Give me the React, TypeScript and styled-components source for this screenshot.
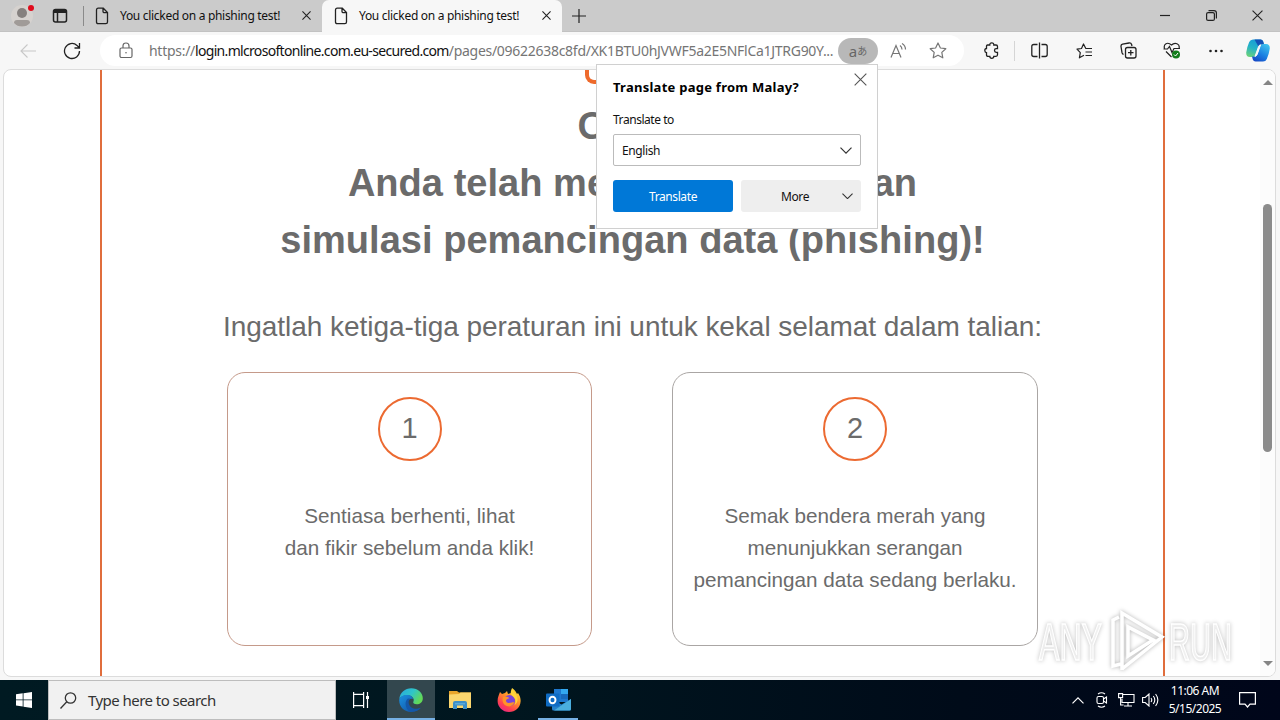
import React from 'react'
import styled, {createGlobalStyle} from 'styled-components'

const GlobalStyle = createGlobalStyle`
    * {
        box-sizing: border-box;
    }
    body {
        margin: 0;
        overflow: hidden;
        font-family: 'Noto Sans', sans-serif;
    }
    svg {
        display: block;
        flex: none;
    }
`

const Desktop = styled.div`
    position: relative;
    display: flex;
    flex-direction: column;
    width: 1280px;
    height: 720px;
    background: #f7f7f7;
    overflow: hidden;
`

/* Tab strip */

const TabStrip = styled.div`
    display: flex;
    align-items: center;
    height: 32px;
    background: #cbcbcb;
    border-bottom: 1px solid #c2c2c2;
`

const Profile = styled.div`
    width: 40px;
    padding-left: 10px;
`

const TabActions = styled.div`
    width: 43px;
    padding-left: 11px;
`

const Divider = styled.div<{$tone?: string}>`
    width: 1px;
    height: 20px;
    background: ${(p) => p.$tone || '#8a8a8a'};
`

const Tab = styled.div<{$active?: boolean}>`
    display: flex;
    align-items: center;
    width: ${(p) => (p.$active ? 240 : 238)}px;
    height: 32px;
    padding: 0 11px 0 ${(p) => (p.$active ? 12 : 11)}px;
    background: ${(p) => (p.$active ? '#f7f7f7' : 'transparent')};
    border-radius: 7px 7px 0 0;
    font-size: 12px;
    color: #111;
`

const TabTitle = styled.div`
    flex: 1;
    margin-left: 11px;
    letter-spacing: -0.3px;
    white-space: nowrap;
`

const NewTab = styled.div`
    flex: 1;
    padding-left: 10px;
`

const WindowButton = styled.div`
    display: flex;
    justify-content: center;
    width: 46px;
`

/* Toolbar */

const Toolbar = styled.div`
    display: flex;
    align-items: center;
    height: 37px;
    background: #f7f7f7;
`

const NavButton = styled.div`
    display: flex;
    justify-content: center;
    width: 44px;
    &:first-child {
        margin-left: 6px;
    }
`

const AddressBar = styled.div`
    display: flex;
    align-items: center;
    width: 864px;
    height: 31px;
    margin-left: 6px;
    padding-left: 18px;
    background: #fff;
    border-radius: 16px;
`

const Url = styled.div`
    width: 689px;
    margin-left: 15px;
    font-size: 14px;
    letter-spacing: -0.28px;
    white-space: nowrap;
    color: #757575;
    b {
        font-weight: 400;
        letter-spacing: -0.68px;
        color: #111;
    }
`

const TranslatePill = styled.div`
    display: flex;
    align-items: center;
    justify-content: center;
    width: 40px;
    height: 26px;
    border-radius: 13px;
    background: #b8b8b8;
    color: #666;
    font: 15px/24px 'Noto Sans', 'Noto Sans CJK JP', sans-serif;
    small {
        font-size: 10px;
    }
`

const AddressIcon = styled.div`
    display: flex;
    justify-content: center;
    width: 40px;
`

const ToolIcons = styled.div`
    display: flex;
    flex: 1;
    align-items: center;
    padding-left: 6px;
`

const ToolIcon = styled.div<{$width?: number}>`
    display: flex;
    justify-content: center;
    width: ${(p) => p.$width || 44}px;
`

/* Page */

const PageFrame = styled.div`
    display: flex;
    width: 1273px;
    height: 608px;
    margin: 0 0 3px 3px;
    background: #fff;
    border: 1px solid #dcdcdc;
    border-radius: 8px;
    overflow: hidden;
`

const PageColumn = styled.div`
    display: flex;
    flex-direction: column;
    align-items: center;
    width: 1065px;
    margin-left: 96px;
    border: 2px solid #e06d3c;
    border-width: 0 2px;
    font-family: 'Liberation Sans', Arial, sans-serif;
    color: #6b6b6b;
`

const LogoEdge = styled.div`
    width: 96px;
    height: 14px;
    border: 4px solid #ee6a2c;
    border-top: 0;
    border-radius: 0 0 9px 9px;
`

const Heading = styled.h1`
    margin: 14px 0 0;
    font-size: 38px;
    line-height: 57px;
    letter-spacing: 0.04px;
    text-align: center;
    white-space: nowrap;
`

const Lead = styled.p`
    margin: 38px 0 0;
    font-size: 28px;
    line-height: 40px;
    letter-spacing: -0.04px;
    white-space: nowrap;
`

const Cards = styled.div`
    display: flex;
    gap: 80px;
    margin-top: 25px;
`

const Card = styled.div<{$edge: string; $width: number}>`
    display: flex;
    flex-direction: column;
    align-items: center;
    width: ${(p) => p.$width}px;
    height: 274px;
    padding-top: 24px;
    border: 1px solid ${(p) => p.$edge};
    border-radius: 18px;
`

const Step = styled.div`
    width: 64px;
    height: 64px;
    border: 2px solid #ec6a31;
    border-radius: 50%;
    font-size: 29px;
    line-height: 59px;
    text-align: center;
`

const CardText = styled.p`
    margin: 39px 0 0;
    font-size: 20.7px;
    line-height: 32px;
    text-align: center;
    white-space: nowrap;
`

const Scrollbar = styled.div`
    display: flex;
    flex-direction: column;
    align-items: center;
    width: 15px;
    margin-left: auto;
    padding: 9px 0;
    background: #fcfcfc;
`

const ScrollThumb = styled.div`
    width: 9px;
    height: 248px;
    margin: 119px 0 auto;
    border-radius: 5px;
    background: #8b8b8b;
`

/* Translate popup */

const Popup = styled.div`
    position: absolute;
    left: 596px;
    top: 64px;
    width: 282px;
    height: 165px;
    padding: 14px 16px;
    background: #fff;
    border: 1px solid #d0d0d0;
    font-size: 12px;
    color: #111;
`

const PopupHeader = styled.div`
    display: flex;
    justify-content: space-between;
    height: 32px;
    margin-right: -6px;
    font-weight: 700;
    font-size: 13px;
    line-height: 17px;
    letter-spacing: 0.26px;
    white-space: nowrap;
    color: #000;
    svg {
        margin-top: -6px;
    }
`

const Label = styled.div`
    height: 23px;
    line-height: 18px;
    letter-spacing: -0.45px;
`

const Select = styled.div`
    display: flex;
    align-items: center;
    justify-content: space-between;
    height: 32px;
    padding: 0 8px;
    border: 1px solid #bbb;
    border-radius: 2px;
    letter-spacing: -0.4px;
`

const PopupButtons = styled.div`
    display: flex;
    gap: 8px;
    margin-top: 14px;
`

const PopupButton = styled.div<{$primary?: boolean}>`
    display: flex;
    align-items: center;
    justify-content: ${(p) => (p.$primary ? 'center' : 'flex-end')};
    gap: 33px;
    width: 120px;
    height: 32px;
    padding: ${(p) => (p.$primary ? 0 : '0 8px 0 0')};
    border-radius: 3px;
    letter-spacing: -0.4px;
    background: ${(p) => (p.$primary ? '#0078d7' : '#eee')};
    color: ${(p) => (p.$primary ? '#fff' : '#111')};
`

/* Taskbar */

const Taskbar = styled.div`
    display: flex;
    align-items: stretch;
    height: 40px;
    background: linear-gradient(90deg, #001a22 0%, #00161f 40%, #000b19 75%, #00061a 100%);
    color: #fff;
`

const TaskButton = styled.div<{$active?: boolean; $open?: boolean; $width?: number}>`
    display: flex;
    align-items: center;
    justify-content: center;
    width: ${(p) => p.$width || 48}px;
    background: ${(p) => (p.$active ? '#33474e' : 'transparent')};
    box-shadow: ${(p) => (p.$active || p.$open ? 'inset 0 -2px #76b0e4' : 'none')};
`

const SearchBox = styled.div`
    display: flex;
    align-items: center;
    gap: 11px;
    width: 288px;
    padding-left: 11px;
    background: #f1f1f1;
    border: 1px solid #bdbdbd;
    color: #333;
    font-size: 15px;
    letter-spacing: -0.55px;
`

const Tray = styled.div`
    display: flex;
    align-items: center;
    margin-left: auto;
`

const TrayIcon = styled.div`
    display: flex;
    justify-content: center;
    width: 24px;
`

const Clock = styled.div`
    width: 66px;
    font-size: 12px;
    line-height: 18px;
    letter-spacing: -0.5px;
    text-align: center;
    white-space: nowrap;
`

const Notifications = styled.div`
    display: flex;
    justify-content: center;
    width: 38px;
    margin-right: 14px;
`

const Watermark = styled.svg`
    position: absolute;
    left: 1030px;
    top: 600px;
    filter: drop-shadow(0 0 2px rgba(0, 0, 0, 0.3));
`

const strokeProps = {fill: 'none', stroke: '#222', strokeWidth: 1.2}

const FileIcon = () => (
    <svg width="14" height="18" viewBox="0 0 14 18" {...strokeProps} strokeWidth="1.3">
        <path d="M1.5 3q0-1.8 1.8-1.8h5l4.2 4.3V15q0 1.7-1.7 1.7H3.2Q1.5 16.7 1.5 15zM8 1.5V4.2q0 1.5 1.5 1.5h3" />
    </svg>
)

const CrossIcon = ({size = 10, color = '#222'}: {size?: number; color?: string}) => (
    <svg width={size} height={size} viewBox="0 0 10 10" fill="none" stroke={color} strokeWidth={11 / size}>
        <path d="M.5.5l9 9M9.5.5l-9 9" />
    </svg>
)

const ChevronDown = ({size = 12}: {size?: number}) => (
    <svg width={size} height={size / 2 + 1} viewBox="0 0 12 7" fill="none" stroke="#333" strokeWidth="1.2">
        <path d="M.5.6L6 6.1 11.5.6" />
    </svg>
)

const EdgeIcon = () => (
    <svg width="24" height="24" viewBox="0 0 24 24">
        <defs>
            <linearGradient id="edgeTop" x1="0" y1="0" x2="1" y2=".5">
                <stop offset="0" stopColor="#28a8e0" />
                <stop offset=".55" stopColor="#2fc5c9" />
                <stop offset="1" stopColor="#62d957" />
            </linearGradient>
            <linearGradient id="edgeLow" x1="0" y1="0" x2="1" y2="1">
                <stop offset="0" stopColor="#1a91e0" />
                <stop offset="1" stopColor="#124a9c" />
            </linearGradient>
        </defs>
        <path d="M.3 11C1 4.5 6 .2 12.300.2 19 .2 23.800 5 23.800 10.200c0 4-3 6-6 6-2.600 0-4-1-3.500-2.200C16 10.800 13 7.300 8.500 7.300 4.500 7.300 1.500 9 .3 11z" fill="url(#edgeTop)" />
        <path d="M.2 12.500C.2 9 4 7 8 7c3.500 0 6 2 6 4-3-1-5.500 1-5.500 4 0 3.500 3 6.500 7.500 6.500 2.500 0 4.500-1 5.800-1.700C19.500 22.500 16 23.900 12 23.900 5.500 23.900.2 19 .2 12.500z" fill="url(#edgeLow)" />
        <path d="M9 10.500c-4 3-3 11 2.500 13.300 4.500.4 8-1.300 10.300-4-5 2.400-10.800.7-12-4.300-.4-1.800.2-3.800 1.500-4.700z" fill="#1457a8" />
    </svg>
)

const FolderIcon = () => (
    <svg width="22" height="20" viewBox="0 0 22 20">
        <path d="M0 1h8l2 1.500h12V18H0z" fill="#e9a52b" />
        <path d="M0 4.500L10 4l1.500-1.500H22V18H0z" fill="#fbd66e" />
        <path d="M4 19v-6q0-2 2-2h10q2 0 2 2v6h-4v-3.500H8V19z" fill="#3d8fc8" />
        <path d="M6 13h10v1.500H6z" fill="#5aa9da" />
    </svg>
)

const FirefoxIcon = () => (
    <svg width="24" height="24" viewBox="0 0 24 24">
        <defs>
            <linearGradient id="fox" x1=".8" y1="0" x2=".2" y2="1">
                <stop offset="0" stopColor="#ffe83c" />
                <stop offset=".4" stopColor="#ff9528" />
                <stop offset=".75" stopColor="#ff4051" />
                <stop offset="1" stopColor="#e52588" />
            </linearGradient>
        </defs>
        <path d="M3 4l2 2 3-1 2-2 1 3 3-1 1-5c3 2 4 4 5 6l1-1c2 3 2.800 5.500 2.600 8.500C23.200 19.500 18.500 24 12 24 5.500 24 .6 19 .6 13 .6 9 2 7 3 4z" fill="url(#fox)" />
        <circle cx="12.5" cy="12.5" r="5.600" fill="#7b45d8" />
        <path d="M6 9c3-1 5 0 6.500 1.300-1.500 0-2.200 1-3.200 1.500-1 2 1 4 3.500 3 2 0 3-1 4.500-.5-1 3-3.500 4.500-6.300 4C7 18 4.500 14 6 9z" fill="#ff9328" />
        <path d="M14 3c-1 3 1 4.500 3 6.500 2 2.200 2 5 .5 7.500 4-2.500 4-8 1-11L15 .5z" fill="#ffd53a" />
    </svg>
)

const OutlookIcon = () => (
    <svg width="25" height="24" viewBox="0 0 25 24">
        <path d="M8 1h14v13H8z" fill="#1e78cf" />
        <path d="M15 1h7v5h-7z" fill="#33a8ef" />
        <path d="M15 6h7v5h-7z" fill="#1769bc" />
        <path d="M6 11l9.500 5.500L25 11v10q0 1.500-1.500 1.500h-16Q6 22.500 6 21z" fill="#2481cb" />
        <path d="M25 11v10q0 1.500-1.500 1.500H8z" fill="#4aaede" />
        <rect y="5.500" width="13.500" height="13" rx="1" fill="#0f6cc4" />
        <ellipse cx="6.500" cy="12" rx="3" ry="3.300" fill="none" stroke="#fff" strokeWidth="1.900" />
    </svg>
)

const CopilotIcon = () => (
    <svg width="24" height="23" viewBox="0 0 24 23">
        <defs>
            <linearGradient id="pilotA" x1=".6" y1="0" x2=".2" y2="1">
                <stop offset="0" stopColor="#169bd8" />
                <stop offset=".5" stopColor="#26b3c6" />
                <stop offset="1" stopColor="#6cd279" />
            </linearGradient>
            <linearGradient id="pilotB" x1=".8" y1="0" x2=".2" y2="1">
                <stop offset="0" stopColor="#3ec3ee" />
                <stop offset=".55" stopColor="#1a80e2" />
                <stop offset="1" stopColor="#1647c5" />
            </linearGradient>
        </defs>
        <path d="M7 .5h7.500q2 0 2.700 2l.8 3h-2.500q-2 0-2.700 2L10 15.500q-.8 2.500-3.500 2.500H4Q0 18 .2 13.500 1 8 3.200 3 4.300.5 7 .5z" fill="url(#pilotA)" />
        <path d="M8.500.5h6q2 0 2.700 2l.8 3h-3q-2 0-2.600 2z" fill="#1451b5" />
        <path d="M17 22.500H9.500q-2 0-2.700-2L6 17.500h2.500q2 0 2.700-2L14 7.500Q14.800 5 17.500 5H20q4 0 3.800 4.500-.8 5.500-3 10.500-1.100 2.500-3.800 2.500z" fill="url(#pilotB)" />
        <path d="M12.600 7.500q.6-1.500 2-1.700L11.300 15q-.6 2-2.300 2.400z" fill="#f7f7f7" stroke="#f7f7f7" />
    </svg>
)

const Browser: React.FC = () => (
    <>
        <TabStrip>
            <Profile>
                <svg width="26" height="26" viewBox="0 0 26 26">
                    <circle cx="12" cy="13" r="11" fill="#d6d2cf" />
                    <circle cx="12" cy="10" r="5" fill="#85807e" />
                    <path d="M4 20q0-3 3-3h10q3 0 3 3-3 3.500-8 3.500T4 20z" fill="#a09b98" />
                    <circle cx="21" cy="5" r="3" fill="#e00b1c" />
                </svg>
            </Profile>
            <TabActions>
                <svg width="18" height="16" viewBox="0 0 18 16" {...strokeProps} strokeWidth="1.5">
                    <rect x="2.5" y="1.5" width="13" height="12.5" rx="2" />
                    <path d="M2.500 3.500h13" strokeWidth="3" />
                    <path d="M6.500 4v10" />
                </svg>
            </TabActions>
            <Divider />
            <Tab>
                <FileIcon />
                <TabTitle>You clicked on a phishing test!</TabTitle>
                <CrossIcon size={9} />
            </Tab>
            <Tab $active>
                <FileIcon />
                <TabTitle>You clicked on a phishing test!</TabTitle>
                <CrossIcon size={9} />
            </Tab>
            <NewTab>
                <svg width="14" height="14" viewBox="0 0 14 14" {...strokeProps}>
                    <path d="M7 0v14M0 7h14" />
                </svg>
            </NewTab>
            <WindowButton>
                <svg width="10" height="11" {...strokeProps}>
                    <path d="M0 5.500h11" />
                </svg>
            </WindowButton>
            <WindowButton>
                <svg width="11" height="11" {...strokeProps}>
                    <rect x=".6" y="2.6" width="7.8" height="7.8" rx="1.5" />
                    <path d="M2.500.6H8q2.400 0 2.400 2.400v5.500" />
                </svg>
            </WindowButton>
            <WindowButton>
                <CrossIcon size={11} />
            </WindowButton>
        </TabStrip>
        <Toolbar>
            <NavButton>
                <svg width="16" height="14" viewBox="0 0 16 14" fill="none" stroke="#c8c8c8" strokeWidth="1.1">
                    <path d="M16 7H1M7.500.5L1 7l6.500 6.500" />
                </svg>
            </NavButton>
            <NavButton>
                <svg width="18" height="18" viewBox="0 0 18 18" {...strokeProps} strokeWidth="1.3">
                    <path d="M16.500 9A7.500 7.500 0 1 1 14 3.400L16 5.500M16.500 1v5h-5" />
                </svg>
            </NavButton>
            <AddressBar>
                <svg width="16" height="18" viewBox="0 0 16 18" fill="none" stroke="#666" strokeWidth="1.2">
                    <rect x="2" y="6" width="12" height="9.5" rx="1.5" />
                    <path d="M5 6V4q0-3 3-3t3 3v2" />
                    <circle cx="8" cy="10.7" r=".8" fill="#666" stroke="none" />
                </svg>
                <Url>
                    https://<b>login.mlcrosoftonline.com.eu-secured.com</b>/pages/09622638c8fd/XK1BTU0hJVWF5a2E5NFlCa1JTRG90Y...
                </Url>
                <TranslatePill>
                    a<small>あ</small>
                </TranslatePill>
                <AddressIcon>
                    <svg width="17" height="16" viewBox="0 0 17 16" fill="none" stroke="#767676" strokeWidth="1.2">
                        <path d="M1 14.500L6 2.500l5 12M2.800 10.500h6.500M10 2.500q2 1.500 2 4M12 .5q3.500 2 3.500 6" />
                    </svg>
                </AddressIcon>
                <AddressIcon>
                    <svg width="18" height="17" viewBox="0 0 18 17" fill="none" stroke="#767676" strokeWidth="1.2" strokeLinejoin="round">
                        <path d="M9 1l2.400 5 5.400.7-4 3.700 1 5.400L9 13.200l-4.800 2.600 1-5.400-4-3.700L6.600 6z" />
                    </svg>
                </AddressIcon>
            </AddressBar>
            <ToolIcons>
                <ToolIcon>
                    <svg width="16" height="17" viewBox="0 0 16 17" {...strokeProps} strokeWidth="1.3">
                        <path d="M3.500 3h2.300Q5.700.8 7.800.8T9.800 3H12q1.500 0 1.500 1.500v2.200h-1.300q-1.700 0-1.700 1.800t1.700 1.800h1.300v2.500q0 1.500-1.500 1.500H9.800q0 2-2 2t-2-2H4q-1.500 0-1.500-1.500v-2.200Q.8 10.500.8 8.500t1.700-2V4.500Q2.500 3 3.500 3z" />
                    </svg>
                </ToolIcon>
                <Divider $tone="#d5d5d5" />
                <ToolIcon $width={48}>
                    <svg width="17" height="17" viewBox="0 0 17 17" {...strokeProps} strokeWidth="1.3">
                        <path d="M8.500.5v16M6.500 2.500H2.800q-2 0-2 2v8q0 2 2 2h3.700M10.500 2.500h3.700q2 0 2 2v8q0 2-2 2h-3.700" />
                    </svg>
                </ToolIcon>
                <ToolIcon $width={42}>
                    <svg width="17" height="16" viewBox="0 0 17 16" {...strokeProps} strokeLinejoin="round">
                        <path d="M16 5.500H9.800L7.500 1 5.500 5.500 1 6.200l3.300 3.400L3.400 14.800 8 12.300M9.500 9H16M9.500 12.500H16" />
                    </svg>
                </ToolIcon>
                <ToolIcon $width={46}>
                    <svg width="17" height="17" viewBox="0 0 17 17" {...strokeProps} strokeWidth="1.3">
                        <rect x="5.5" y="5.5" width="10.5" height="10.5" rx="2" />
                        <path d="M10.800 8v5.500M8 10.700h5.500M3.500 12.500q-1.200-.5-1.500-1.800L1 4.500Q.8 2.500 2.600 2.200L9 1q2-.3 2.600 1.500L12 4" />
                    </svg>
                </ToolIcon>
                <ToolIcon $width={42}>
                    <svg width="18" height="17" viewBox="0 0 18 17" {...strokeProps}>
                        <path d="M1.500 6.500Q.5 3 3 1.700T8.500 3Q11 .5 14 1.700t2 4.800M.5 7h4l2-2.500 2.500 6 2-4h6M3 9.500l5.500 5.500" />
                        <circle cx="13" cy="12.500" r="4" fill="#117c1a" stroke="none" />
                        <path d="M11 12.500l1.500 1.500 2.500-3" stroke="#fff" strokeWidth="1" />
                    </svg>
                </ToolIcon>
                <ToolIcon $width={46}>
                    <svg width="14" height="4" fill="#222">
                        <circle cx="1.5" cy="2" r="1.3" />
                        <circle cx="7" cy="2" r="1.3" />
                        <circle cx="12.5" cy="2" r="1.3" />
                    </svg>
                </ToolIcon>
                <ToolIcon $width={38}>
                    <CopilotIcon />
                </ToolIcon>
            </ToolIcons>
        </Toolbar>
    </>
)

const Page: React.FC = () => (
    <PageFrame>
        <PageColumn>
            <LogoEdge />
            <Heading>
                Oops!
                <br />
                Anda telah menjalankan latihan
                <br />
                simulasi pemancingan data (phishing)!
            </Heading>
            <Lead>Ingatlah ketiga-tiga peraturan ini untuk kekal selamat dalam talian:</Lead>
            <Cards>
                <Card $edge="#c59a8a" $width={365}>
                    <Step>1</Step>
                    <CardText>
                        Sentiasa berhenti, lihat
                        <br />
                        dan fikir sebelum anda klik!
                    </CardText>
                </Card>
                <Card $edge="#aaa6a4" $width={366}>
                    <Step>2</Step>
                    <CardText>
                        Semak bendera merah yang
                        <br />
                        menunjukkan serangan
                        <br />
                        pemancingan data sedang berlaku.
                    </CardText>
                </Card>
            </Cards>
        </PageColumn>
        <Scrollbar>
            <svg width="10" height="6">
                <path d="M0 6l5-5 5 5z" fill="#858585" />
            </svg>
            <ScrollThumb />
            <svg width="10" height="6">
                <path d="M0 0l5 5 5-5z" fill="#858585" />
            </svg>
        </Scrollbar>
    </PageFrame>
)

const TranslatePopup: React.FC = () => (
    <Popup>
        <PopupHeader>
            Translate page from Malay?
            <CrossIcon size={13} color="#555" />
        </PopupHeader>
        <Label>Translate to</Label>
        <Select>
            English
            <ChevronDown />
        </Select>
        <PopupButtons>
            <PopupButton $primary>Translate</PopupButton>
            <PopupButton>
                More
                <ChevronDown size={11} />
            </PopupButton>
        </PopupButtons>
    </Popup>
)

const TaskbarRow: React.FC = () => (
    <Taskbar>
        <TaskButton>
            <svg width="16" height="16" viewBox="0 0 16 16" fill="#fff">
                <path d="M0 2.300L6.700 1.300v6.200H0zM7.500 1.200L16 0v7.500H7.500zM0 8.300h6.700v6.200L0 13.600zM7.500 8.300H16V16l-8.500-1.200z" />
            </svg>
        </TaskButton>
        <SearchBox>
            <svg width="17" height="17" viewBox="0 0 17 17" fill="none" stroke="#333" strokeWidth="1.3">
                <circle cx="10.5" cy="6" r="5.2" />
                <path d="M6.800 9.700L.5 16.500" />
            </svg>
            Type here to search
        </SearchBox>
        <TaskButton $width={51}>
            <svg width="17" height="16" viewBox="0 0 17 16" fill="none" stroke="#fff" strokeWidth="1.2">
                <path d="M.6 0v2.400h10V0M.6 16v-2.400h10V16M.6 2.400v11.200M10.600 2.400v11.200M14.500 0v16" />
                <path d="M13 4h3v3h-3z" fill="#fff" stroke="none" />
            </svg>
        </TaskButton>
        <TaskButton $active>
            <EdgeIcon />
        </TaskButton>
        <TaskButton $width={50}>
            <FolderIcon />
        </TaskButton>
        <TaskButton>
            <FirefoxIcon />
        </TaskButton>
        <TaskButton $width={5} />
        <TaskButton $open $width={40}>
            <OutlookIcon />
        </TaskButton>
        <Tray>
            <TrayIcon>
                <svg width="12" height="7" fill="none" stroke="#fff" strokeWidth="1.2">
                    <path d="M.5 6.400L6 .9l5.500 5.500" />
                </svg>
            </TrayIcon>
            <TrayIcon>
                <svg width="14" height="16" viewBox="0 0 14 16" fill="none" stroke="#fff" strokeWidth="1.1">
                    <rect x="2" y="4.5" width="6.5" height="7" rx="1.5" />
                    <path d="M8.500 7l3-2v6l-3-2M3 2q3.500-2.500 7 0M3 14q3.500 2.500 7 0" />
                </svg>
            </TrayIcon>
            <TrayIcon>
                <svg width="17" height="14" viewBox="0 0 17 14" fill="none" stroke="#fff" strokeWidth="1.1">
                    <path d="M5 1.500h11v8H4V6M10 9.500v3M6 13h8M.6.6h4v4h-4zM2.600 4.600V12h3" />
                </svg>
            </TrayIcon>
            <TrayIcon>
                <svg width="17" height="14" viewBox="0 0 17 14" fill="none" stroke="#fff" strokeWidth="1.1">
                    <path d="M.6 4.500h2.600L7 1v12L3.200 9.500H.6zM9 5q1.500 2 0 4M11.300 3q3 4 0 8M13.600 1q4.500 6 0 12" />
                </svg>
            </TrayIcon>
            <Clock>
                11:06 AM
                <br />
                5/15/2025
            </Clock>
            <Notifications>
                <svg width="17" height="16" viewBox="0 0 17 16" fill="none" stroke="#fff" strokeWidth="1.2">
                    <path d="M.6.6h15.800v11.500H11L8.500 15 6 12.100H.6z" />
                </svg>
            </Notifications>
        </Tray>
    </Taskbar>
)

const App: React.FC = () => (
    <Desktop>
        <GlobalStyle />
        <Browser />
        <Page />
        <TranslatePopup />
        <TaskbarRow />
        <Watermark width="240" height="80" viewBox="0 0 240 80" fill="#fff" fillOpacity=".6">
            <text x="9" y="60" fontSize="51" fontFamily="Liberation Sans" textLength="63" lengthAdjust="spacingAndGlyphs" stroke="#fff" strokeWidth="1.5">
                ANY
            </text>
            <text x="139" y="60" fontSize="51" fontFamily="Liberation Sans" textLength="63" lengthAdjust="spacingAndGlyphs" stroke="#fff" strokeWidth="1.5">
                RUN
            </text>
            <path d="M91 64l-8 2V20l6-3M92 70V13l40 24-40 32M98 56V27l25 13z" fill="none" stroke="#fff" strokeWidth="3.5" />
        </Watermark>
    </Desktop>
)

export default App
